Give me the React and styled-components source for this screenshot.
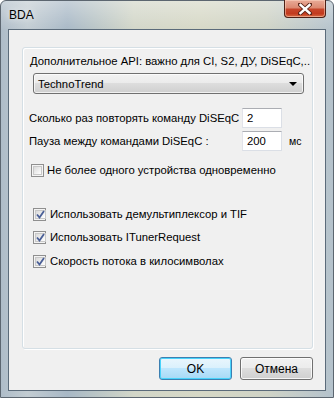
import React from "react";
import styled, { createGlobalStyle } from "styled-components";

const Global = createGlobalStyle`
  html, body { margin: 0; padding: 0; background: #ffffff; }
  body { font-family: "Liberation Sans", Arial, sans-serif; font-size: 11.3px; color: #000; }
  * { box-sizing: border-box; }
`;

const Window = styled.div`
  width: 334px;
  height: 398px;
  display: flex;
  flex-direction: column;
  padding: 0 7px 7px 7px;
  border: 1px solid #5c6670;
  border-radius: 6px 6px 0 0;
  background:
    linear-gradient(to bottom, rgba(255,255,255,0.35) 0px, rgba(255,255,255,0) 30px),
    linear-gradient(to right, #aebcc8 0%, #c2ccd2 8%, #a8b8c6 20%, #b8c4c6 28%, #d2d6c8 40%, #d6d8c6 60%, #cfd3c6 80%, #b4c2cc 100%);
`;

const TitleBar = styled.div`
  height: 28px;
  display: flex;
  justify-content: space-between;
  align-items: flex-start;
`;

const Title = styled.span`
  padding-left: 1px;
  line-height: 28px;
  font-size: 12px;
  color: #000;
  text-shadow: 0 0 6px rgba(255,255,255,0.9);
`;

const CloseButton = styled.div`
  width: 42px;
  height: 18px;
  margin-top: -1px;
  border: 1px solid #4d2016;
  border-top: none;
  border-radius: 0 0 4px 4px;
  background: linear-gradient(to bottom, #e9ab98 0%, #dc8a72 45%, #c6452a 55%, #c23a1e 80%, #d86a44 100%);
  box-shadow: inset 0 0 0 1px rgba(255,220,200,0.5);
  display: flex;
  align-items: center;
  justify-content: center;
`;

const Client = styled.div`
  flex: 1;
  display: flex;
  flex-direction: column;
  background: #f0f0f0;
  border: 1px solid #5b6b7a;
  padding: 17px 12px 10px 13px;
`;

const GroupBox = styled.div`
  height: 302px;
  border: 1px solid #d5dfe5;
  border-radius: 3px;
  box-shadow: inset 1px 1px 0 #ffffff, 1px 1px 0 #ffffff;
  display: flex;
  flex-direction: column;
`;

const Caption = styled.div`
  margin-top: 6px;
  padding-left: 7px;
  line-height: 14px;
  white-space: nowrap;
`;

const Combo = styled.div`
  margin: 5px 0 0 10px;
  width: 271px;
  height: 21px;
  border: 1px solid #707070;
  border-radius: 3px;
  background: linear-gradient(to bottom, #f2f2f2 0%, #ebebeb 50%, #dddddd 50%, #cfcfcf 100%);
  box-shadow: inset 0 0 0 1px rgba(255,255,255,0.7);
  display: flex;
  align-items: center;
  justify-content: space-between;
  padding: 0 6px 0 4px;
`;

const Arrow = styled.span`
  width: 0;
  height: 0;
  border-left: 4px solid transparent;
  border-right: 4px solid transparent;
  border-top: 4px solid #000;
`;

const FieldRow = styled.div`
  display: flex;
  align-items: center;
  height: 20px;
  margin-top: ${p => p.$mt}px;
  padding-left: 6px;
`;

const FieldLabel = styled.span`
  width: 213px;
  white-space: nowrap;
`;

const Input = styled.div`
  width: 40px;
  height: 20px;
  background: #fff;
  border: 1px solid #dbdfe6;
  border-top-color: #abadb3;
  border-left-color: #e2e3ea;
  padding-left: 4px;
  line-height: 18px;
`;

const Unit = styled.span`
  margin-left: 7px;
  font-size: 10.5px;
`;

const CheckRow = styled.div`
  display: flex;
  align-items: center;
  height: 16px;
  margin-top: ${p => p.$mt}px;
  padding-left: ${p => p.$pl}px;
  gap: ${p => p.$gap}px;
  white-space: nowrap;
`;

const Box = styled.span`
  width: 13px;
  height: 13px;
  border: 1px solid #8f8f8f;
  background: #f4f4f4;
  padding: 1px;
  display: flex;
`;

const BoxInner = styled.span`
  flex: 1;
  border: 1px solid #c8c8c8;
  background: linear-gradient(135deg, #dadada 0%, #f0f0f0 60%, #ffffff 100%);
  display: flex;
  align-items: center;
  justify-content: center;
`;

const ButtonRow = styled.div`
  display: flex;
  justify-content: flex-end;
  gap: 8px;
  margin-top: 8px;
`;

const Button = styled.div`
  width: 73px;
  height: 23px;
  border: 1px solid ${p => (p.$default ? "#3c7fb1" : "#707070")};
  border-radius: 3px;
  background: ${p =>
    p.$default
      ? "linear-gradient(to bottom, #eaf6fd 0%, #d9f0fc 50%, #bee6fd 50%, #a7d9f5 100%)"
      : "linear-gradient(to bottom, #f2f2f2 0%, #ebebeb 50%, #dddddd 50%, #cfcfcf 100%)"};
  box-shadow: inset 0 0 0 1px ${p => (p.$default ? "#48d3fb" : "rgba(255,255,255,0.8)")};
  display: flex;
  align-items: center;
  justify-content: center;
  font-size: 12px;
`;

function Check({ checked }) {
  return (
    <Box>
      <BoxInner>
        {checked && (
          <svg width="9" height="9" viewBox="0 0 9 9">
            <path d="M1 4.5 L3.5 7.5 L8 1" fill="none" stroke="#4a5f97" strokeWidth="1.8" />
          </svg>
        )}
      </BoxInner>
    </Box>
  );
}

export default function App() {
  return (
    <>
      <Global />
      <Window>
        <TitleBar>
          <Title>BDA</Title>
          <CloseButton>
            <svg width="14" height="12" viewBox="0 0 14 12">
              <path d="M2 1.5 L12 10.5 M12 1.5 L2 10.5" stroke="#5a2418" strokeWidth="4.2" strokeLinecap="square" />
              <path d="M2.5 2 L11.5 10 M11.5 2 L2.5 10" stroke="#ffffff" strokeWidth="2.4" strokeLinecap="square" />
            </svg>
          </CloseButton>
        </TitleBar>
        <Client>
          <GroupBox>
            <Caption>Дополнительное API: важно для CI, S2, ДУ, DiSEqC,..</Caption>
            <Combo>
              <span>TechnoTrend</span>
              <Arrow />
            </Combo>
            <FieldRow $mt={14}>
              <FieldLabel>Сколько раз повторять команду DiSEqC</FieldLabel>
              <Input>2</Input>
            </FieldRow>
            <FieldRow $mt={3}>
              <FieldLabel>Пауза между командами DiSEqC :</FieldLabel>
              <Input>200</Input>
              <Unit>мс</Unit>
            </FieldRow>
            <CheckRow $mt={11} $pl={8} $gap={3}>
              <Check />
              <span>Не более одного устройства одновременно</span>
            </CheckRow>
            <CheckRow $mt={28} $pl={10} $gap={4}>
              <Check checked />
              <span>Использовать демультиплексор и TIF</span>
            </CheckRow>
            <CheckRow $mt={7} $pl={10} $gap={4}>
              <Check checked />
              <span>Использовать ITunerRequest</span>
            </CheckRow>
            <CheckRow $mt={8} $pl={10} $gap={4}>
              <Check checked />
              <span>Скорость потока в килосимволах</span>
            </CheckRow>
          </GroupBox>
          <ButtonRow>
            <Button $default>OK</Button>
            <Button>Отмена</Button>
          </ButtonRow>
        </Client>
      </Window>
    </>
  );
}
